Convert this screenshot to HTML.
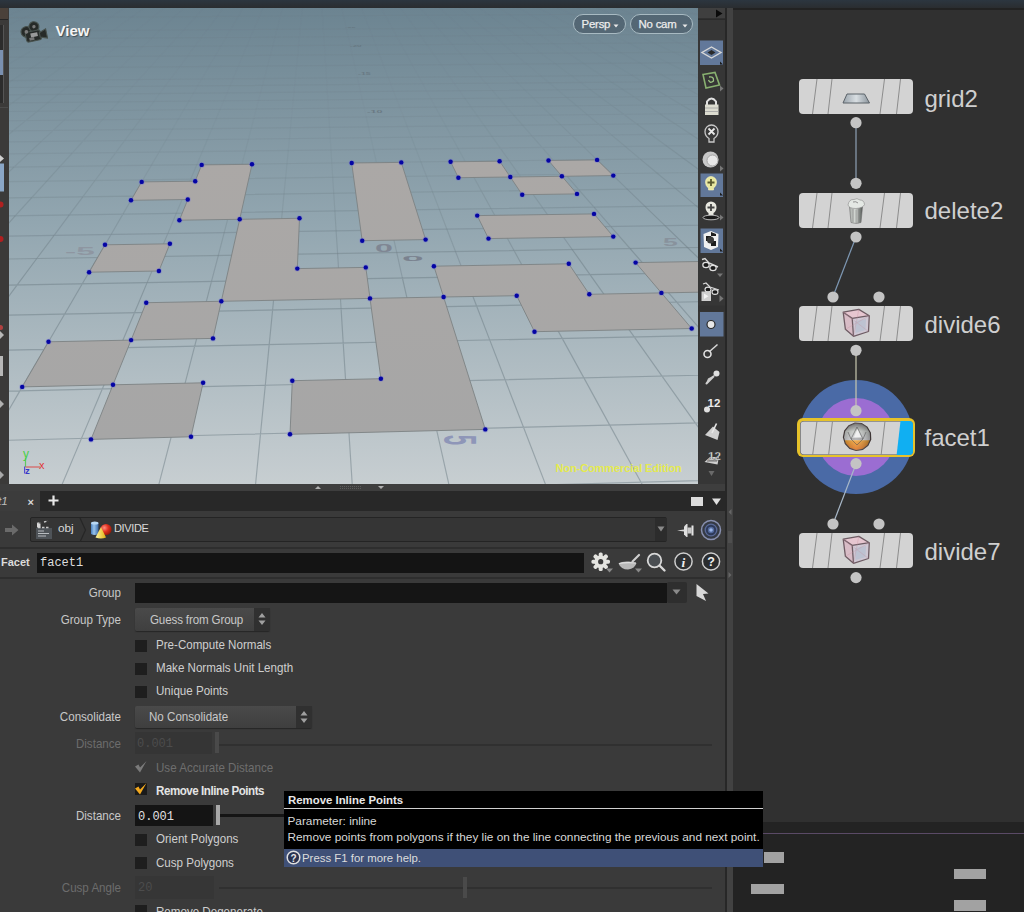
<!DOCTYPE html>
<html><head><meta charset="utf-8">
<style>
*{margin:0;padding:0;box-sizing:border-box}
html,body{width:1024px;height:912px;overflow:hidden;background:#3a3a3a;font-family:"Liberation Sans",sans-serif;color:#d0d0d0}
.a{position:absolute}
.lbl{position:absolute;font-size:12.8px;line-height:13px;color:#c8c8c8;white-space:nowrap;transform:scaleX(0.905);transform-origin:0 0;margin-top:-1px}
.rl{text-align:right;width:121px;left:0;transform-origin:121px 0}
.cb{position:absolute;left:135px;width:12px;height:12px;background:#1e1e1e}
.ct{position:absolute;left:156px;font-size:12.8px;line-height:13px;color:#cfcfcf;white-space:nowrap;transform:scaleX(0.905);transform-origin:0 0;margin-top:-1px}
.node{position:absolute;left:799px;width:114px;height:35px;border-radius:4px;background:#d3d3d3;overflow:hidden}
.dot{position:absolute;width:11px;height:11px;border-radius:50%;background:#c4c4c4}
.nl{position:absolute;left:924.5px;font-size:24px;line-height:27px;color:#cfcfcf;white-space:nowrap}
</style></head><body>
<!-- top bar -->
<div class="a" style="left:0;top:0;width:1024px;height:8px;background:linear-gradient(#2c3640,#2a2d30)"></div>
<!-- left strip -->
<div class="a" style="left:0;top:8px;width:9px;height:477px;background:#3b3a39"></div>
<!-- viewport -->
<div class="a" style="left:9px;top:8px;width:689px;height:476px;overflow:hidden">
<svg width="689" height="476" viewBox="9 8 689 476" style="position:absolute;left:0;top:0">
<defs><linearGradient id="bg" x1="0" y1="8" x2="0" y2="484" gradientUnits="userSpaceOnUse"><stop offset="0" stop-color="#6c8491"/><stop offset="0.45" stop-color="#92a6b0"/><stop offset="1" stop-color="#c7ced1"/></linearGradient><linearGradient id="pg" x1="0" y1="160" x2="0" y2="440" gradientUnits="userSpaceOnUse"><stop offset="0" stop-color="#aba8a6"/><stop offset="1" stop-color="#a6a6a6"/></linearGradient></defs>
<rect x="9" y="8" width="689" height="476" fill="url(#bg)"/>
<path d="M9.8,-0.7L3.5,1.6M3.5,1.6L-3.0,4.1M28.4,-0.8L22.5,1.5M22.5,1.5L16.4,4.0M16.4,4.0L10.0,6.5M10.0,6.5L3.3,9.1M3.3,9.1L-3.6,11.9M46.9,-0.9L41.4,1.4M41.4,1.4L35.7,3.9M35.7,3.9L29.8,6.4M29.8,6.4L23.5,9.0M23.5,9.0L17.0,11.8M17.0,11.8L10.2,14.7M10.2,14.7L3.1,17.7M3.1,17.7L-4.4,20.8M65.5,-1.0L60.3,1.3M60.3,1.3L55.0,3.8M55.0,3.8L49.5,6.3M49.5,6.3L43.7,8.9M43.7,8.9L37.6,11.7M37.6,11.7L31.3,14.5M31.3,14.5L24.7,17.6M24.7,17.6L17.7,20.7M17.7,20.7L10.5,24.0M10.5,24.0L2.8,27.5M2.8,27.5L-5.2,31.2M83.9,-1.1L79.2,1.3M79.2,1.3L74.3,3.7M74.3,3.7L69.2,6.2M69.2,6.2L63.8,8.8M63.8,8.8L58.2,11.6M58.2,11.6L52.4,14.4M52.4,14.4L46.2,17.4M46.2,17.4L39.8,20.6M39.8,20.6L33.1,23.9M33.1,23.9L26.0,27.4M26.0,27.4L18.6,31.0M18.6,31.0L10.7,34.8M10.7,34.8L2.5,38.9M2.5,38.9L-6.2,43.2M102.4,-1.2L98.0,1.2M98.0,1.2L93.5,3.6M93.5,3.6L88.8,6.1M88.8,6.1L83.9,8.7M83.9,8.7L78.7,11.4M78.7,11.4L73.4,14.3M73.4,14.3L67.7,17.3M67.7,17.3L61.8,20.5M61.8,20.5L55.6,23.8M55.6,23.8L49.1,27.2M49.1,27.2L42.3,30.9M42.3,30.9L35.1,34.7M35.1,34.7L27.5,38.7M27.5,38.7L19.5,43.0M19.5,43.0L11.1,47.5M120.8,-1.2L116.8,1.1M116.8,1.1L112.7,3.5M112.7,3.5L108.4,6.0M108.4,6.0L103.9,8.6M103.9,8.6L99.2,11.3M99.2,11.3L94.3,14.2M94.3,14.2L89.2,17.2M89.2,17.2L83.8,20.3M83.8,20.3L78.2,23.6M78.2,23.6L72.2,27.1M72.2,27.1L66.0,30.7M66.0,30.7L59.5,34.5M59.5,34.5L52.5,38.6M52.5,38.6L45.2,42.8M45.2,42.8L37.5,47.3M37.5,47.3L29.3,52.1M139.2,-1.3L135.6,1.0M135.6,1.0L131.9,3.4M131.9,3.4L128.0,5.9M128.0,5.9L123.9,8.5M123.9,8.5L119.7,11.2M119.7,11.2L115.3,14.1M115.3,14.1L110.6,17.1M110.6,17.1L105.8,20.2M105.8,20.2L100.7,23.5M100.7,23.5L95.3,26.9M95.3,26.9L89.7,30.6M89.7,30.6L83.7,34.4M83.7,34.4L77.5,38.4M77.5,38.4L70.9,42.6M70.9,42.6L63.9,47.1M63.9,47.1L56.5,51.9M56.5,51.9L48.7,56.9M157.5,-1.4L154.3,0.9M154.3,0.9L151.0,3.3M151.0,3.3L147.5,5.8M147.5,5.8L143.9,8.4M143.9,8.4L140.1,11.1M140.1,11.1L136.1,14.0M136.1,14.0L132.0,16.9M132.0,16.9L127.6,20.1M127.6,20.1L123.1,23.3M123.1,23.3L118.3,26.8M118.3,26.8L113.3,30.4M113.3,30.4L108.0,34.2M108.0,34.2L102.4,38.2M102.4,38.2L96.5,42.5M96.5,42.5L90.2,46.9M90.2,46.9L83.6,51.7M83.6,51.7L76.6,56.7M76.6,56.7L69.2,62.1M175.9,-1.5L173.0,0.8M173.0,0.8L170.1,3.2M170.1,3.2L167.0,5.7M167.0,5.7L163.8,8.3M163.8,8.3L160.5,11.0M160.5,11.0L157.0,13.8M157.0,13.8L153.3,16.8M153.3,16.8L149.5,19.9M149.5,19.9L145.5,23.2M145.5,23.2L141.2,26.6M141.2,26.6L136.8,30.3M136.8,30.3L132.1,34.1M132.1,34.1L127.2,38.1M127.2,38.1L122.0,42.3M122.0,42.3L116.5,46.8M116.5,46.8L110.7,51.5M110.7,51.5L104.5,56.5M104.5,56.5L98.0,61.9M98.0,61.9L91.0,67.5M91.0,67.5L83.5,73.6M194.2,-1.6L191.7,0.7M191.7,0.7L189.2,3.1M189.2,3.1L186.5,5.6M186.5,5.6L183.7,8.2M183.7,8.2L180.8,10.9M180.8,10.9L177.8,13.7M177.8,13.7L174.6,16.7M174.6,16.7L171.3,19.8M171.3,19.8L167.8,23.1M167.8,23.1L164.1,26.5M164.1,26.5L160.3,30.1M160.3,30.1L156.3,33.9M156.3,33.9L152.0,37.9M152.0,37.9L147.5,42.1M147.5,42.1L142.7,46.6M142.7,46.6L137.7,51.3M137.7,51.3L132.3,56.3M132.3,56.3L126.6,61.6M126.6,61.6L120.6,67.3M120.6,67.3L114.1,73.3M114.1,73.3L107.2,79.8M212.4,-1.7L210.3,0.6M210.3,0.6L208.2,3.0M208.2,3.0L205.9,5.5M205.9,5.5L203.6,8.1M203.6,8.1L201.1,10.8M201.1,10.8L198.6,13.6M198.6,13.6L195.9,16.6M195.9,16.6L193.1,19.7M193.1,19.7L190.1,22.9M190.1,22.9L187.0,26.4M187.0,26.4L183.7,30.0M183.7,30.0L180.3,33.7M180.3,33.7L176.7,37.7M176.7,37.7L172.9,41.9M172.9,41.9L168.9,46.4M168.9,46.4L164.6,51.1M164.6,51.1L160.1,56.1M160.1,56.1L155.2,61.4M155.2,61.4L150.1,67.1M150.1,67.1L144.7,73.1M144.7,73.1L138.8,79.5M138.8,79.5L132.6,86.4M230.7,-1.8L229.0,0.5M229.0,0.5L227.2,2.9M227.2,2.9L225.3,5.4M225.3,5.4L223.4,8.0M223.4,8.0L221.4,10.7M221.4,10.7L219.3,13.5M219.3,13.5L217.1,16.5M217.1,16.5L214.8,19.6M214.8,19.6L212.3,22.8M212.3,22.8L209.8,26.2M209.8,26.2L207.1,29.8M207.1,29.8L204.3,33.6M204.3,33.6L201.4,37.6M201.4,37.6L198.2,41.8M198.2,41.8L194.9,46.2M194.9,46.2L191.4,50.9M191.4,50.9L187.7,55.9M187.7,55.9L183.8,61.2M183.8,61.2L179.6,66.8M179.6,66.8L175.1,72.8M175.1,72.8L170.3,79.3M170.3,79.3L165.2,86.1M165.2,86.1L159.7,93.5M248.9,-1.9L247.5,0.4M247.5,0.4L246.1,2.8M246.1,2.8L244.7,5.3M244.7,5.3L243.2,7.9M243.2,7.9L241.6,10.6M241.6,10.6L240.0,13.4M240.0,13.4L238.2,16.3M238.2,16.3L236.4,19.4M236.4,19.4L234.5,22.7M234.5,22.7L232.6,26.1M232.6,26.1L230.5,29.7M230.5,29.7L228.3,33.4M228.3,33.4L226.0,37.4M226.0,37.4L223.5,41.6M223.5,41.6L220.9,46.0M220.9,46.0L218.2,50.7M218.2,50.7L215.3,55.7M215.3,55.7L212.2,61.0M212.2,61.0L209.0,66.6M209.0,66.6L205.5,72.6M205.5,72.6L201.7,79.0M201.7,79.0L197.7,85.8M197.7,85.8L193.4,93.2M193.4,93.2L188.8,101.1M267.0,-2.0L266.1,0.3M266.1,0.3L265.1,2.7M265.1,2.7L264.0,5.2M264.0,5.2L262.9,7.8M262.9,7.8L261.8,10.5M261.8,10.5L260.6,13.3M260.6,13.3L259.4,16.2M259.4,16.2L258.1,19.3M258.1,19.3L256.7,22.5M256.7,22.5L255.3,25.9M255.3,25.9L253.8,29.5M253.8,29.5L252.2,33.3M252.2,33.3L250.5,37.2M250.5,37.2L248.8,41.4M248.8,41.4L246.9,45.8M246.9,45.8L244.9,50.5M244.9,50.5L242.8,55.5M242.8,55.5L240.6,60.7M240.6,60.7L238.2,66.4M238.2,66.4L235.7,72.3M235.7,72.3L233.0,78.7M233.0,78.7L230.2,85.6M230.2,85.6L227.1,92.9M227.1,92.9L223.7,100.8M223.7,100.8L220.1,109.3M285.2,-2.0L284.6,0.2M284.6,0.2L284.0,2.6M284.0,2.6L283.3,5.1M283.3,5.1L282.6,7.7M282.6,7.7L281.9,10.3M281.9,10.3L281.2,13.2M281.2,13.2L280.5,16.1M280.5,16.1L279.7,19.2M279.7,19.2L278.8,22.4M278.8,22.4L277.9,25.8M277.9,25.8L277.0,29.4M277.0,29.4L276.0,33.1M276.0,33.1L275.0,37.1M275.0,37.1L273.9,41.2M273.9,41.2L272.8,45.7M272.8,45.7L271.6,50.3M271.6,50.3L270.3,55.3M270.3,55.3L268.9,60.5M268.9,60.5L267.5,66.1M267.5,66.1L265.9,72.1M265.9,72.1L264.3,78.4M264.3,78.4L262.5,85.3M262.5,85.3L260.6,92.6M260.6,92.6L258.5,100.5M258.5,100.5L256.3,109.0M256.3,109.0L253.9,118.2M303.3,-2.1L303.0,0.1M303.0,0.1L302.8,2.5M302.8,2.5L302.6,5.0M302.6,5.0L302.3,7.6M302.3,7.6L302.1,10.2M302.1,10.2L301.8,13.0M301.8,13.0L301.5,16.0M301.5,16.0L301.2,19.1M301.2,19.1L300.9,22.3M300.9,22.3L300.5,25.7M300.5,25.7L300.2,29.2M300.2,29.2L299.8,33.0M299.8,33.0L299.4,36.9M299.4,36.9L299.0,41.1M299.0,41.1L298.6,45.5M298.6,45.5L298.1,50.1M298.1,50.1L297.7,55.1M297.7,55.1L297.1,60.3M297.1,60.3L296.6,65.9M296.6,65.9L296.0,71.8M296.0,71.8L295.4,78.2M295.4,78.2L294.7,85.0M294.7,85.0L294.0,92.3M294.0,92.3L293.2,100.1M293.2,100.1L292.4,108.6M292.4,108.6L291.5,117.8M321.3,-2.2L321.5,0.1M321.5,0.1L321.6,2.4M321.6,2.4L321.8,4.9M321.8,4.9L322.0,7.4M322.0,7.4L322.1,10.1M322.1,10.1L322.3,12.9M322.3,12.9L322.5,15.9M322.5,15.9L322.7,18.9M322.7,18.9L322.9,22.2M322.9,22.2L323.1,25.5M323.1,25.5L323.3,29.1M323.3,29.1L323.6,32.8M323.6,32.8L323.8,36.8M323.8,36.8L324.1,40.9M324.1,40.9L324.4,45.3M324.4,45.3L324.7,49.9M324.7,49.9L325.0,54.9M325.0,54.9L325.3,60.1M325.3,60.1L325.7,65.7M325.7,65.7L326.0,71.6M326.0,71.6L326.4,77.9M326.4,77.9L326.9,84.7M326.9,84.7L327.3,92.0M327.3,92.0L327.8,99.8M327.8,99.8L328.4,108.2M328.4,108.2L328.9,117.4M339.9,-0.0L340.4,2.3M340.4,2.3L341.0,4.8M341.0,4.8L341.6,7.3M341.6,7.3L342.2,10.0M342.2,10.0L342.8,12.8M342.8,12.8L343.5,15.7M343.5,15.7L344.1,18.8M344.1,18.8L344.9,22.0M344.9,22.0L345.6,25.4M345.6,25.4L346.4,28.9M346.4,28.9L347.3,32.7M347.3,32.7L348.1,36.6M348.1,36.6L349.1,40.7M349.1,40.7L350.1,45.1M350.1,45.1L351.1,49.7M351.1,49.7L352.2,54.7M352.2,54.7L353.4,59.9M353.4,59.9L354.6,65.4M354.6,65.4L356.0,71.3M356.0,71.3L357.4,77.6M357.4,77.6L358.9,84.4M358.9,84.4L360.5,91.7M360.5,91.7L362.3,99.5M362.3,99.5L364.2,107.9M364.2,107.9L366.2,117.0M358.3,-0.1L359.2,2.2M359.2,2.2L360.1,4.7M360.1,4.7L361.1,7.2M361.1,7.2L362.2,9.9M362.2,9.9L363.2,12.7M363.2,12.7L364.4,15.6M364.4,15.6L365.6,18.7M365.6,18.7L366.8,21.9M366.8,21.9L368.1,25.3M368.1,25.3L369.5,28.8M369.5,28.8L370.9,32.5M370.9,32.5L372.4,36.4M372.4,36.4L374.0,40.6M374.0,40.6L375.7,44.9M375.7,44.9L377.5,49.6M377.5,49.6L379.4,54.5M379.4,54.5L381.4,59.7M381.4,59.7L383.5,65.2M383.5,65.2L385.8,71.1M385.8,71.1L388.2,77.4M388.2,77.4L390.8,84.1M390.8,84.1L393.6,91.4M393.6,91.4L396.6,99.1M396.6,99.1L399.9,107.5M399.9,107.5L403.4,116.6M376.6,-0.2L377.9,2.1M377.9,2.1L379.3,4.6M379.3,4.6L380.7,7.1M380.7,7.1L382.1,9.8M382.1,9.8L383.6,12.6M383.6,12.6L385.2,15.5M385.2,15.5L386.9,18.6M386.9,18.6L388.7,21.8M388.7,21.8L390.5,25.1M390.5,25.1L392.4,28.6M392.4,28.6L394.5,32.4M394.5,32.4L396.6,36.3M396.6,36.3L398.9,40.4M398.9,40.4L401.3,44.8M401.3,44.8L403.8,49.4M403.8,49.4L406.5,54.2M406.5,54.2L409.3,59.4M409.3,59.4L412.3,65.0M412.3,65.0L415.6,70.8M415.6,70.8L419.0,77.1M419.0,77.1L422.7,83.8M422.7,83.8L426.6,91.0M426.6,91.0L430.9,98.8M430.9,98.8L435.5,107.2M394.9,-0.3L396.6,2.0M396.6,2.0L398.3,4.5M398.3,4.5L400.2,7.0M400.2,7.0L402.0,9.7M402.0,9.7L404.0,12.5M404.0,12.5L406.1,15.4M406.1,15.4L408.2,18.4M408.2,18.4L410.5,21.6M410.5,21.6L412.9,25.0M412.9,25.0L415.4,28.5M415.4,28.5L418.0,32.2M418.0,32.2L420.8,36.1M420.8,36.1L423.7,40.2M423.7,40.2L426.8,44.6M426.8,44.6L430.0,49.2M430.0,49.2L433.5,54.0M433.5,54.0L437.2,59.2M437.2,59.2L441.1,64.7M441.1,64.7L445.2,70.6M445.2,70.6L449.7,76.9M449.7,76.9L454.4,83.6M454.4,83.6L459.5,90.7M459.5,90.7L465.0,98.5M413.2,-0.4L415.3,1.9M415.3,1.9L417.4,4.4M417.4,4.4L419.6,6.9M419.6,6.9L421.9,9.6M421.9,9.6L424.3,12.4M424.3,12.4L426.9,15.3M426.9,15.3L429.5,18.3M429.5,18.3L432.3,21.5M432.3,21.5L435.2,24.8M435.2,24.8L438.3,28.4M438.3,28.4L441.5,32.1M441.5,32.1L444.9,35.9M444.9,35.9L448.5,40.1M448.5,40.1L452.2,44.4M452.2,44.4L456.2,49.0M456.2,49.0L460.5,53.8M460.5,53.8L465.0,59.0M465.0,59.0L469.7,64.5M469.7,64.5L474.8,70.3M474.8,70.3L480.3,76.6M480.3,76.6L486.1,83.3M486.1,83.3L492.3,90.4M431.5,-0.5L433.9,1.8M433.9,1.8L436.4,4.3M436.4,4.3L439.0,6.8M439.0,6.8L441.8,9.5M441.8,9.5L444.6,12.3M444.6,12.3L447.6,15.1M447.6,15.1L450.8,18.2M450.8,18.2L454.0,21.4M454.0,21.4L457.5,24.7M457.5,24.7L461.1,28.2M461.1,28.2L464.9,31.9M464.9,31.9L468.9,35.8M468.9,35.8L473.2,39.9M473.2,39.9L477.6,44.2M477.6,44.2L482.4,48.8M482.4,48.8L487.4,53.6M487.4,53.6L492.7,58.8M492.7,58.8L498.3,64.3M498.3,64.3L504.4,70.1M504.4,70.1L510.8,76.3M510.8,76.3L517.7,83.0M449.7,-0.6L452.5,1.8M452.5,1.8L455.4,4.2M455.4,4.2L458.4,6.7M458.4,6.7L461.6,9.4M461.6,9.4L464.9,12.1M464.9,12.1L468.3,15.0M468.3,15.0L472.0,18.1M472.0,18.1L475.7,21.2M475.7,21.2L479.7,24.6M479.7,24.6L483.9,28.1M483.9,28.1L488.3,31.7M488.3,31.7L492.9,35.6M492.9,35.6L497.8,39.7M497.8,39.7L503.0,44.0M503.0,44.0L508.4,48.6M508.4,48.6L514.2,53.4M514.2,53.4L520.3,58.6M520.3,58.6L526.8,64.0M526.8,64.0L533.8,69.9M533.8,69.9L541.2,76.1M467.9,-0.7L471.1,1.7M471.1,1.7L474.3,4.1M474.3,4.1L477.8,6.6M477.8,6.6L481.4,9.3M481.4,9.3L485.1,12.0M485.1,12.0L489.0,14.9M489.0,14.9L493.1,17.9M493.1,17.9L497.4,21.1M497.4,21.1L501.9,24.4M501.9,24.4L506.6,27.9M506.6,27.9L511.6,31.6M511.6,31.6L516.9,35.5M516.9,35.5L522.4,39.5M522.4,39.5L528.2,43.9M528.2,43.9L534.4,48.4M534.4,48.4L540.9,53.2M540.9,53.2L547.9,58.4M547.9,58.4L555.3,63.8M486.1,-0.8L489.6,1.6M489.6,1.6L493.3,4.0M493.3,4.0L497.1,6.5M497.1,6.5L501.1,9.2M501.1,9.2L505.3,11.9M505.3,11.9L509.6,14.8M509.6,14.8L514.2,17.8M514.2,17.8L519.0,21.0M519.0,21.0L524.1,24.3M524.1,24.3L529.3,27.8M529.3,27.8L534.9,31.4M534.9,31.4L540.8,35.3M540.8,35.3L546.9,39.4M546.9,39.4L553.4,43.7M553.4,43.7L560.3,48.2M560.3,48.2L567.6,53.0M567.6,53.0L575.4,58.1M504.2,-0.8L508.1,1.5M508.1,1.5L512.1,3.9M512.1,3.9L516.4,6.4M516.4,6.4L520.8,9.1M520.8,9.1L525.4,11.8M525.4,11.8L530.2,14.7M530.2,14.7L535.3,17.7M535.3,17.7L540.6,20.8M540.6,20.8L546.1,24.2M546.1,24.2L552.0,27.6M552.0,27.6L558.1,31.3M558.1,31.3L564.6,35.1M564.6,35.1L571.4,39.2M571.4,39.2L578.6,43.5M578.6,43.5L586.2,48.0M586.2,48.0L594.3,52.8M522.3,-0.9L526.5,1.4M526.5,1.4L531.0,3.8M531.0,3.8L535.6,6.3M535.6,6.3L540.5,8.9M540.5,8.9L545.5,11.7M545.5,11.7L550.8,14.6M550.8,14.6L556.3,17.6M556.3,17.6L562.1,20.7M562.1,20.7L568.2,24.0M568.2,24.0L574.6,27.5M574.6,27.5L581.3,31.1M581.3,31.1L588.4,35.0M588.4,35.0L595.8,39.0M595.8,39.0L603.7,43.3M603.7,43.3L612.0,47.8M540.3,-1.0L545.0,1.3M545.0,1.3L549.8,3.7M549.8,3.7L554.8,6.2M554.8,6.2L560.1,8.8M560.1,8.8L565.6,11.6M565.6,11.6L571.3,14.4M571.3,14.4L577.3,17.4M577.3,17.4L583.6,20.6M583.6,20.6L590.2,23.9M590.2,23.9L597.1,27.4M597.1,27.4L604.4,31.0M604.4,31.0L612.1,34.8M612.1,34.8L620.2,38.9M620.2,38.9L628.7,43.1M558.4,-1.1L563.4,1.2M563.4,1.2L568.6,3.6M568.6,3.6L574.0,6.1M574.0,6.1L579.7,8.7M579.7,8.7L585.6,11.5M585.6,11.5L591.8,14.3M591.8,14.3L598.3,17.3M598.3,17.3L605.0,20.5M605.0,20.5L612.2,23.8M612.2,23.8L619.6,27.2M619.6,27.2L627.5,30.8M627.5,30.8L635.8,34.7M635.8,34.7L644.5,38.7M576.4,-1.2L581.7,1.1M581.7,1.1L587.3,3.5M587.3,3.5L593.2,6.0M593.2,6.0L599.2,8.6M599.2,8.6L605.6,11.4M605.6,11.4L612.2,14.2M612.2,14.2L619.2,17.2M619.2,17.2L626.4,20.3M626.4,20.3L634.1,23.6M634.1,23.6L642.1,27.1M642.1,27.1L650.5,30.7M650.5,30.7L659.4,34.5M594.4,-1.3L600.1,1.0M600.1,1.0L606.0,3.4M606.0,3.4L612.3,5.9M612.3,5.9L618.7,8.5M618.7,8.5L625.5,11.2M625.5,11.2L632.6,14.1M632.6,14.1L640.0,17.1M640.0,17.1L647.8,20.2M647.8,20.2L655.9,23.5M655.9,23.5L664.5,26.9M664.5,26.9L673.5,30.5M612.3,-1.4L618.4,0.9M618.4,0.9L624.7,3.3M624.7,3.3L631.3,5.8M631.3,5.8L638.2,8.4M638.2,8.4L645.4,11.1M645.4,11.1L653.0,14.0M653.0,14.0L660.8,17.0M660.8,17.0L669.1,20.1M669.1,20.1L677.7,23.4M677.7,23.4L686.8,26.8M630.2,-1.5L636.7,0.8M636.7,0.8L643.4,3.2M643.4,3.2L650.4,5.7M650.4,5.7L657.7,8.3M657.7,8.3L665.3,11.0M665.3,11.0L673.3,13.9M673.3,13.9L681.6,16.8M681.6,16.8L690.4,20.0M690.4,20.0L699.5,23.2M648.1,-1.6L654.9,0.7M654.9,0.7L662.0,3.1M662.0,3.1L669.4,5.6M669.4,5.6L677.1,8.2M677.1,8.2L685.1,10.9M685.1,10.9L693.5,13.8M693.5,13.8L702.3,16.7M666.0,-1.6L673.1,0.6M673.1,0.6L680.6,3.0M680.6,3.0L688.3,5.5M688.3,5.5L696.5,8.1M696.5,8.1L704.9,10.8M683.8,-1.7L691.3,0.5M691.3,0.5L699.1,2.9M699.1,2.9L707.3,5.4" stroke="#6e7e86" stroke-opacity="0.05" stroke-width="1.15" fill="none"/>
<path d="M11.1,47.5L2.1,52.3M2.1,52.3L-7.4,57.4M29.3,52.1L20.7,57.1M20.7,57.1L11.4,62.5M11.4,62.5L1.6,68.3M1.6,68.3L-8.9,74.4M48.7,56.9L40.4,62.3M40.4,62.3L31.5,68.0M31.5,68.0L22.0,74.1M22.0,74.1L11.9,80.6M69.2,62.1L61.3,67.8M61.3,67.8L52.8,73.8M52.8,73.8L43.8,80.3M43.8,80.3L34.1,87.3M83.5,73.6L75.6,80.1M75.6,80.1L67.0,87.0M67.0,87.0L57.9,94.5M107.2,79.8L99.8,86.7M99.8,86.7L91.9,94.2M91.9,94.2L83.4,102.2M132.6,86.4L125.9,93.8M125.9,93.8L118.6,101.8M118.6,101.8L110.8,110.4M159.7,93.5L153.8,101.5M153.8,101.5L147.4,110.1M147.4,110.1L140.5,119.4M188.8,101.1L183.8,109.7M183.8,109.7L178.4,119.0M178.4,119.0L172.5,129.0M220.1,109.3L216.2,118.6M216.2,118.6L212.0,128.6M212.0,128.6L207.4,139.5M253.9,118.2L251.3,128.2M251.3,128.2L248.5,139.1M291.5,117.8L290.5,127.7M290.5,127.7L289.5,138.6M289.5,138.6L288.3,150.5M328.9,117.4L329.6,127.3M329.6,127.3L330.2,138.1M330.2,138.1L331.0,150.0M366.2,117.0L368.5,126.9M368.5,126.9L370.9,137.7M370.9,137.7L373.5,149.5M403.4,116.6L407.2,126.5M407.2,126.5L411.4,137.2M435.5,107.2L440.4,116.2M440.4,116.2L445.8,126.1M445.8,126.1L451.7,136.8M465.0,98.5L470.9,106.8M470.9,106.8L477.4,115.8M477.4,115.8L484.3,125.6M492.3,90.4L499.1,98.2M499.1,98.2L506.3,106.5M506.3,106.5L514.1,115.5M517.7,83.0L525.0,90.1M525.0,90.1L533.0,97.8M533.0,97.8L541.5,106.1M541.2,76.1L549.1,82.7M549.1,82.7L557.6,89.8M557.6,89.8L566.8,97.5M555.3,63.8L563.1,69.6M563.1,69.6L571.5,75.8M571.5,75.8L580.5,82.4M580.5,82.4L590.1,89.5M575.4,58.1L583.6,63.6M583.6,63.6L592.4,69.4M592.4,69.4L601.8,75.5M601.8,75.5L611.8,82.2M594.3,52.8L602.8,57.9M602.8,57.9L611.9,63.4M611.9,63.4L621.6,69.1M621.6,69.1L631.9,75.3M612.0,47.8L620.8,52.6M620.8,52.6L630.2,57.7M630.2,57.7L640.1,63.1M640.1,63.1L650.7,68.9M628.7,43.1L637.7,47.7M637.7,47.7L647.3,52.4M647.3,52.4L657.5,57.5M657.5,57.5L668.2,62.9M644.5,38.7L653.7,43.0M653.7,43.0L663.4,47.5M663.4,47.5L673.7,52.2M673.7,52.2L684.7,57.3M659.4,34.5L668.7,38.5M668.7,38.5L678.6,42.8M678.6,42.8L689.0,47.3M689.0,47.3L700.1,52.0M673.5,30.5L682.9,34.4M682.9,34.4L692.9,38.4M692.9,38.4L703.4,42.6M686.8,26.8L696.4,30.4M696.4,30.4L706.4,34.2M699.5,23.2L709.1,26.6" stroke="#6e7e86" stroke-opacity="0.10" stroke-width="1.15" fill="none"/>
<path d="M11.9,80.6L1.1,87.6M1.1,87.6L-10.6,95.1M34.1,87.3L23.7,94.8M23.7,94.8L12.5,102.8M57.9,94.5L48.0,102.5M48.0,102.5L37.3,111.2M83.4,102.2L74.1,110.8M74.1,110.8L64.1,120.2M110.8,110.4L102.4,119.8M102.4,119.8L93.2,129.9M140.5,119.4L132.9,129.5M132.9,129.5L124.7,140.5M172.5,129.0L166.1,140.0M166.1,140.0L159.1,152.0M207.4,139.5L202.4,151.5M202.4,151.5L196.8,164.7M248.5,139.1L245.4,151.0M245.4,151.0L242.0,164.1M288.3,150.5L287.0,163.5M287.0,163.5L285.6,177.9M331.0,150.0L331.8,163.0M331.8,163.0L332.7,177.3M373.5,149.5L376.4,162.4M376.4,162.4L379.7,176.7M411.4,137.2L415.9,149.0M415.9,149.0L420.9,161.9M451.7,136.8L458.1,148.5M458.1,148.5L465.1,161.3M484.3,125.6L491.9,136.3M491.9,136.3L500.1,147.9M514.1,115.5L522.6,125.2M522.6,125.2L531.9,135.8M541.5,106.1L550.8,115.1M550.8,115.1L560.8,124.8M566.8,97.5L576.7,105.8M576.7,105.8L587.3,114.7M590.1,89.5L600.5,97.2M600.5,97.2L611.6,105.4M611.8,82.2L622.5,89.2M622.5,89.2L634.1,96.8M631.9,75.3L643.0,81.9M643.0,81.9L654.8,88.9M650.7,68.9L662.0,75.0M662.0,75.0L674.1,81.6M674.1,81.6L687.0,88.6M668.2,62.9L679.7,68.6M679.7,68.6L692.0,74.8M692.0,74.8L705.1,81.3M684.7,57.3L696.3,62.7M696.3,62.7L708.7,68.4" stroke="#6e7e86" stroke-opacity="0.15" stroke-width="1.15" fill="none"/>
<path d="M-1415.3,3.8L1759.7,-11.2M-1574.6,14.7L1873.0,-3.1M-1766.1,27.7L2005.6,6.3M-2000.9,43.7L2162.9,17.5M-2139.4,53.2L2253.0,23.9M-2295.5,63.8L2352.3,31.0M-2472.7,75.9L2462.4,38.8M-2675.9,89.7L2585.1,47.5M-2910.9,105.8L2722.6,57.3M-3042.9,114.8L2797.8,62.6M-3186.1,124.5L2877.8,68.3M-3342.0,135.1L2963.2,74.4M-3512.6,146.8L3054.5,80.9M-3699.8,159.5L3152.3,87.9M-3906.2,173.6L3257.3,95.3M-4135.1,189.2L3370.4,103.4M-4390.1,206.6L3492.5,112.1M12.5,102.8L0.4,111.5M0.4,111.5L-12.7,121.0M37.3,111.2L25.8,120.6M25.8,120.6L13.2,130.8M64.1,120.2L53.3,130.3M53.3,130.3L41.4,141.4M93.2,129.9L83.1,141.0M83.1,141.0L72.2,153.1M124.7,140.5L115.7,152.6M115.7,152.6L105.9,165.8M159.1,152.0L151.4,165.2M151.4,165.2L142.9,179.8M196.8,164.7L190.7,179.2M242.0,164.1L238.3,178.6M238.3,178.6L234.1,194.6M285.6,177.9L284.0,193.9M332.7,177.3L333.7,193.2M379.7,176.7L383.2,192.5M420.9,161.9L426.4,176.1M426.4,176.1L432.5,191.8M465.1,161.3L472.9,175.5M500.1,147.9L509.2,160.7M531.9,135.8L542.0,147.4M542.0,147.4L553.1,160.2M560.8,124.8L571.7,135.4M571.7,135.4L583.7,146.9M587.3,114.7L598.9,124.4M598.9,124.4L611.5,134.9M611.6,105.4L623.7,114.3M623.7,114.3L636.8,124.0M634.1,96.8L646.5,105.1M646.5,105.1L660.0,113.9M654.8,88.9L667.6,96.5M667.6,96.5L681.3,104.7M687.0,88.6L701.0,96.2" stroke="#6e7e86" stroke-opacity="0.20" stroke-width="1.15" fill="none"/>
<path d="M-4676.2,226.1L3624.8,121.5M-4999.4,248.1L3768.5,131.7M13.2,130.8L-0.5,141.9M41.4,141.4L28.4,153.6M28.4,153.6L14.1,167.0M72.2,153.1L60.1,166.4M105.9,165.8L95.0,180.5M142.9,179.8L133.5,196.0M190.7,179.2L183.9,195.3M183.9,195.3L176.3,213.3M234.1,194.6L229.4,212.6M284.0,193.9L282.3,211.8M333.7,193.2L334.9,211.0M383.2,192.5L387.2,210.2M432.5,191.8L439.3,209.4M472.9,175.5L481.5,191.2M509.2,160.7L519.2,174.8M519.2,174.8L530.3,190.5M553.1,160.2L565.3,174.2M583.7,146.9L596.8,159.6M611.5,134.9L625.2,146.4M625.2,146.4L640.3,159.1M636.8,124.0L651.0,134.5M651.0,134.5L666.6,146.0M660.0,113.9L674.6,123.6M674.6,123.6L690.5,134.0M681.3,104.7L696.1,113.6M696.1,113.6L712.2,123.1" stroke="#6e7e86" stroke-opacity="0.25" stroke-width="1.15" fill="none"/>
<path d="M-5367.3,273.2L3925.4,142.9M14.1,167.0L-1.7,181.8M60.1,166.4L46.8,181.1M46.8,181.1L31.9,197.5M95.0,180.5L82.8,196.8M133.5,196.0L122.9,214.1M176.3,213.3L167.8,233.6M229.4,212.6L224.2,232.7M282.3,211.8L280.3,231.8M334.9,211.0L336.1,230.9M387.2,210.2L391.7,230.0M439.3,209.4L446.9,229.2M481.5,191.2L491.1,208.7M530.3,190.5L542.7,207.9M565.3,174.2L578.9,189.8M596.8,159.6L611.2,173.6M640.3,159.1L656.9,173.0M666.6,146.0L683.7,158.5M690.5,134.0L707.8,145.5" stroke="#6e7e86" stroke-opacity="0.30" stroke-width="1.15" fill="none"/>
<path d="M-5790.0,302.0L4097.1,155.1M31.9,197.5L15.4,215.7M82.8,196.8L69.3,214.9M122.9,214.1L111.1,234.5M224.2,232.7L218.3,255.5M280.3,231.8L278.1,254.4M336.1,230.9L337.6,253.4M391.7,230.0L396.7,252.4M446.9,229.2L455.5,251.5M491.1,208.7L501.9,228.3M542.7,207.9L556.5,227.4M578.9,189.8L594.0,207.1M611.2,173.6L627.2,189.1M656.9,173.0L675.4,188.4M683.7,158.5L702.5,172.4" stroke="#6e7e86" stroke-opacity="0.35" stroke-width="1.15" fill="none"/>
<path d="M-6280.6,335.4L4286.0,168.5M69.3,214.9L54.1,235.4M111.1,234.5L97.7,257.5M167.8,233.6L158.1,256.5M218.3,255.5L211.5,281.4M278.1,254.4L275.6,280.3M337.6,253.4L339.2,279.1M396.7,252.4L402.4,278.0M455.5,251.5L465.3,276.8M501.9,228.3L514.0,250.5M556.5,227.4L572.2,249.5M594.0,207.1L610.9,226.6M627.2,189.1L645.0,206.4M675.4,188.4L695.9,205.6" stroke="#6e7e86" stroke-opacity="0.40" stroke-width="1.15" fill="none"/>
<path d="M-6856.9,374.7L4494.7,183.4M15.4,215.7L-3.2,236.3M54.1,235.4L36.8,258.5M158.1,256.5L147.1,282.6M339.2,279.1L341.1,308.7M514.0,250.5L527.8,275.7M610.9,226.6L630.0,248.5M645.0,206.4L665.0,225.7" stroke="#6e7e86" stroke-opacity="0.45" stroke-width="1.15" fill="none"/>
<path d="M-7543.7,421.5L4726.7,199.9M-8375.8,478.2L4985.8,218.3M-9405.2,548.4L5277.3,239.1M-10711.1,637.4L5607.6,262.5M-12422.5,754.0L5985.0,289.4M-14762.7,913.5L6420.3,320.4M-18156.5,1144.8L6928.1,356.5M36.8,258.5L17.2,284.9M17.2,284.9L-5.5,315.4M97.7,257.5L82.3,283.8M82.3,283.8L64.7,314.0M64.7,314.0L44.1,349.3M44.1,349.3L19.9,390.9M19.9,390.9L-9.1,440.7M147.1,282.6L134.5,312.7M134.5,312.7L119.7,347.7M119.7,347.7L102.3,389.0M102.3,389.0L81.5,438.4M81.5,438.4L56.1,498.6M56.1,498.6L24.6,573.4M24.6,573.4L-15.7,669.2M211.5,281.4L203.8,311.3M203.8,311.3L194.7,346.1M194.7,346.1L184.1,387.1M184.1,387.1L171.4,436.1M171.4,436.1L155.9,495.8M155.9,495.8L136.6,569.9M136.6,569.9L112.0,664.6M275.6,280.3L272.6,310.0M272.6,310.0L269.2,344.6M269.2,344.6L265.3,385.3M265.3,385.3L260.5,433.9M260.5,433.9L254.7,493.0M254.7,493.0L247.5,566.4M247.5,566.4L238.3,660.1M341.1,308.7L343.2,343.0M343.2,343.0L345.8,383.4M345.8,383.4L348.9,431.7M348.9,431.7L352.6,490.3M352.6,490.3L357.2,563.0M357.2,563.0L363.1,655.6M402.4,278.0L409.1,307.3M409.1,307.3L416.7,341.5M416.7,341.5L425.8,381.6M425.8,381.6L436.5,429.4M436.5,429.4L449.6,487.6M449.6,487.6L465.8,559.6M465.8,559.6L486.4,651.2M465.3,276.8L476.6,306.0M476.6,306.0L489.7,339.9M489.7,339.9L505.1,379.8M505.1,379.8L523.5,427.3M523.5,427.3L545.7,484.9M545.7,484.9L573.3,556.2M573.3,556.2L608.3,646.8M527.8,275.7L543.7,304.7M543.7,304.7L562.2,338.4M562.2,338.4L583.9,377.9M583.9,377.9L609.7,425.1M609.7,425.1L641.0,482.2M641.0,482.2L679.7,552.9M679.7,552.9L728.8,642.5M572.2,249.5L590.0,274.6M590.0,274.6L610.4,303.4M610.4,303.4L634.2,336.9M634.2,336.9L662.0,376.1M662.0,376.1L695.2,422.9M695.2,422.9L735.4,479.6M630.0,248.5L651.8,273.5M651.8,273.5L676.7,302.1M676.7,302.1L705.7,335.4M665.0,225.7L687.5,247.5M687.5,247.5L713.2,272.4M695.9,205.6L718.8,224.9" stroke="#6e7e86" stroke-opacity="0.50" stroke-width="1.15" fill="none"/>
<polygon points="201.7,164.9 252.0,164.3 239.7,219.3 179.4,220.2 187.8,199.5 131.0,200.3 141.7,181.9 195.2,181.2" fill="url(#pg)" stroke="#7d8283" stroke-width="0.9"/>
<polygon points="105.0,244.8 169.9,243.8 158.9,271.0 89.1,272.2" fill="url(#pg)" stroke="#7d8283" stroke-width="0.9"/>
<polygon points="239.7,219.3 299.5,218.3 297.3,268.6 365.8,267.4 370.0,298.4 221.3,301.3" fill="url(#pg)" stroke="#7d8283" stroke-width="0.9"/>
<polygon points="146.2,302.7 221.3,301.3 213.0,338.4 131.1,340.1" fill="url(#pg)" stroke="#7d8283" stroke-width="0.9"/>
<polygon points="370.0,298.4 443.6,297.0 485.3,429.4 290.0,434.3 292.3,380.7 380.9,378.7" fill="url(#pg)" stroke="#7d8283" stroke-width="0.9"/>
<polygon points="48.5,341.8 131.1,340.1 113.0,384.8 22.2,386.9" fill="url(#pg)" stroke="#7d8283" stroke-width="0.9"/>
<polygon points="113.0,384.8 203.1,382.8 191.0,436.8 91.0,439.4" fill="url(#pg)" stroke="#7d8283" stroke-width="0.9"/>
<polygon points="351.7,163.0 401.3,162.4 425.6,239.6 362.2,240.7" fill="url(#pg)" stroke="#7d8283" stroke-width="0.9"/>
<polygon points="450.6,161.8 499.6,161.2 510.3,177.0 458.4,177.7" fill="url(#pg)" stroke="#7d8283" stroke-width="0.9"/>
<polygon points="548.5,160.5 597.1,159.9 613.3,175.6 561.9,176.3" fill="url(#pg)" stroke="#7d8283" stroke-width="0.9"/>
<polygon points="510.3,177.0 561.9,176.3 577.0,193.9 522.2,194.7" fill="url(#pg)" stroke="#7d8283" stroke-width="0.9"/>
<polygon points="477.2,215.6 594.0,213.9 613.3,236.6 488.5,238.6" fill="url(#pg)" stroke="#7d8283" stroke-width="0.9"/>
<polygon points="433.9,266.2 568.8,263.8 589.3,294.3 661.4,292.9 691.7,328.5 534.5,331.7 516.7,295.7 443.6,297.0" fill="url(#pg)" stroke="#7d8283" stroke-width="0.9"/>
<polygon points="635.6,262.6 833.4,259.2 874.7,288.9 661.4,292.9" fill="url(#pg)" stroke="#7d8283" stroke-width="0.9"/>
<circle cx="141.7" cy="181.9" r="3.0" fill="#6a6ad8" fill-opacity="0.35"/><circle cx="141.7" cy="181.9" r="2.2" fill="#0404a4"/>
<circle cx="131.0" cy="200.3" r="3.0" fill="#6a6ad8" fill-opacity="0.35"/><circle cx="131.0" cy="200.3" r="2.2" fill="#0404a4"/>
<circle cx="105.0" cy="244.8" r="3.0" fill="#6a6ad8" fill-opacity="0.35"/><circle cx="105.0" cy="244.8" r="2.2" fill="#0404a4"/>
<circle cx="89.1" cy="272.2" r="3.0" fill="#6a6ad8" fill-opacity="0.35"/><circle cx="89.1" cy="272.2" r="2.2" fill="#0404a4"/>
<circle cx="48.5" cy="341.8" r="3.0" fill="#6a6ad8" fill-opacity="0.35"/><circle cx="48.5" cy="341.8" r="2.2" fill="#0404a4"/>
<circle cx="22.2" cy="386.9" r="3.0" fill="#6a6ad8" fill-opacity="0.35"/><circle cx="22.2" cy="386.9" r="2.2" fill="#0404a4"/>
<circle cx="201.7" cy="164.9" r="3.0" fill="#6a6ad8" fill-opacity="0.35"/><circle cx="201.7" cy="164.9" r="2.2" fill="#0404a4"/>
<circle cx="195.2" cy="181.2" r="3.0" fill="#6a6ad8" fill-opacity="0.35"/><circle cx="195.2" cy="181.2" r="2.2" fill="#0404a4"/>
<circle cx="187.8" cy="199.5" r="3.0" fill="#6a6ad8" fill-opacity="0.35"/><circle cx="187.8" cy="199.5" r="2.2" fill="#0404a4"/>
<circle cx="179.4" cy="220.2" r="3.0" fill="#6a6ad8" fill-opacity="0.35"/><circle cx="179.4" cy="220.2" r="2.2" fill="#0404a4"/>
<circle cx="169.9" cy="243.8" r="3.0" fill="#6a6ad8" fill-opacity="0.35"/><circle cx="169.9" cy="243.8" r="2.2" fill="#0404a4"/>
<circle cx="158.9" cy="271.0" r="3.0" fill="#6a6ad8" fill-opacity="0.35"/><circle cx="158.9" cy="271.0" r="2.2" fill="#0404a4"/>
<circle cx="146.2" cy="302.7" r="3.0" fill="#6a6ad8" fill-opacity="0.35"/><circle cx="146.2" cy="302.7" r="2.2" fill="#0404a4"/>
<circle cx="131.1" cy="340.1" r="3.0" fill="#6a6ad8" fill-opacity="0.35"/><circle cx="131.1" cy="340.1" r="2.2" fill="#0404a4"/>
<circle cx="113.0" cy="384.8" r="3.0" fill="#6a6ad8" fill-opacity="0.35"/><circle cx="113.0" cy="384.8" r="2.2" fill="#0404a4"/>
<circle cx="91.0" cy="439.4" r="3.0" fill="#6a6ad8" fill-opacity="0.35"/><circle cx="91.0" cy="439.4" r="2.2" fill="#0404a4"/>
<circle cx="252.0" cy="164.3" r="3.0" fill="#6a6ad8" fill-opacity="0.35"/><circle cx="252.0" cy="164.3" r="2.2" fill="#0404a4"/>
<circle cx="239.7" cy="219.3" r="3.0" fill="#6a6ad8" fill-opacity="0.35"/><circle cx="239.7" cy="219.3" r="2.2" fill="#0404a4"/>
<circle cx="221.3" cy="301.3" r="3.0" fill="#6a6ad8" fill-opacity="0.35"/><circle cx="221.3" cy="301.3" r="2.2" fill="#0404a4"/>
<circle cx="213.0" cy="338.4" r="3.0" fill="#6a6ad8" fill-opacity="0.35"/><circle cx="213.0" cy="338.4" r="2.2" fill="#0404a4"/>
<circle cx="203.1" cy="382.8" r="3.0" fill="#6a6ad8" fill-opacity="0.35"/><circle cx="203.1" cy="382.8" r="2.2" fill="#0404a4"/>
<circle cx="191.0" cy="436.8" r="3.0" fill="#6a6ad8" fill-opacity="0.35"/><circle cx="191.0" cy="436.8" r="2.2" fill="#0404a4"/>
<circle cx="299.5" cy="218.3" r="3.0" fill="#6a6ad8" fill-opacity="0.35"/><circle cx="299.5" cy="218.3" r="2.2" fill="#0404a4"/>
<circle cx="297.3" cy="268.6" r="3.0" fill="#6a6ad8" fill-opacity="0.35"/><circle cx="297.3" cy="268.6" r="2.2" fill="#0404a4"/>
<circle cx="292.3" cy="380.7" r="3.0" fill="#6a6ad8" fill-opacity="0.35"/><circle cx="292.3" cy="380.7" r="2.2" fill="#0404a4"/>
<circle cx="290.0" cy="434.3" r="3.0" fill="#6a6ad8" fill-opacity="0.35"/><circle cx="290.0" cy="434.3" r="2.2" fill="#0404a4"/>
<circle cx="351.7" cy="163.0" r="3.0" fill="#6a6ad8" fill-opacity="0.35"/><circle cx="351.7" cy="163.0" r="2.2" fill="#0404a4"/>
<circle cx="362.2" cy="240.7" r="3.0" fill="#6a6ad8" fill-opacity="0.35"/><circle cx="362.2" cy="240.7" r="2.2" fill="#0404a4"/>
<circle cx="365.8" cy="267.4" r="3.0" fill="#6a6ad8" fill-opacity="0.35"/><circle cx="365.8" cy="267.4" r="2.2" fill="#0404a4"/>
<circle cx="370.0" cy="298.4" r="3.0" fill="#6a6ad8" fill-opacity="0.35"/><circle cx="370.0" cy="298.4" r="2.2" fill="#0404a4"/>
<circle cx="380.9" cy="378.7" r="3.0" fill="#6a6ad8" fill-opacity="0.35"/><circle cx="380.9" cy="378.7" r="2.2" fill="#0404a4"/>
<circle cx="401.3" cy="162.4" r="3.0" fill="#6a6ad8" fill-opacity="0.35"/><circle cx="401.3" cy="162.4" r="2.2" fill="#0404a4"/>
<circle cx="425.6" cy="239.6" r="3.0" fill="#6a6ad8" fill-opacity="0.35"/><circle cx="425.6" cy="239.6" r="2.2" fill="#0404a4"/>
<circle cx="433.9" cy="266.2" r="3.0" fill="#6a6ad8" fill-opacity="0.35"/><circle cx="433.9" cy="266.2" r="2.2" fill="#0404a4"/>
<circle cx="443.6" cy="297.0" r="3.0" fill="#6a6ad8" fill-opacity="0.35"/><circle cx="443.6" cy="297.0" r="2.2" fill="#0404a4"/>
<circle cx="485.3" cy="429.4" r="3.0" fill="#6a6ad8" fill-opacity="0.35"/><circle cx="485.3" cy="429.4" r="2.2" fill="#0404a4"/>
<circle cx="450.6" cy="161.8" r="3.0" fill="#6a6ad8" fill-opacity="0.35"/><circle cx="450.6" cy="161.8" r="2.2" fill="#0404a4"/>
<circle cx="458.4" cy="177.7" r="3.0" fill="#6a6ad8" fill-opacity="0.35"/><circle cx="458.4" cy="177.7" r="2.2" fill="#0404a4"/>
<circle cx="477.2" cy="215.6" r="3.0" fill="#6a6ad8" fill-opacity="0.35"/><circle cx="477.2" cy="215.6" r="2.2" fill="#0404a4"/>
<circle cx="488.5" cy="238.6" r="3.0" fill="#6a6ad8" fill-opacity="0.35"/><circle cx="488.5" cy="238.6" r="2.2" fill="#0404a4"/>
<circle cx="516.7" cy="295.7" r="3.0" fill="#6a6ad8" fill-opacity="0.35"/><circle cx="516.7" cy="295.7" r="2.2" fill="#0404a4"/>
<circle cx="534.5" cy="331.7" r="3.0" fill="#6a6ad8" fill-opacity="0.35"/><circle cx="534.5" cy="331.7" r="2.2" fill="#0404a4"/>
<circle cx="499.6" cy="161.2" r="3.0" fill="#6a6ad8" fill-opacity="0.35"/><circle cx="499.6" cy="161.2" r="2.2" fill="#0404a4"/>
<circle cx="510.3" cy="177.0" r="3.0" fill="#6a6ad8" fill-opacity="0.35"/><circle cx="510.3" cy="177.0" r="2.2" fill="#0404a4"/>
<circle cx="522.2" cy="194.7" r="3.0" fill="#6a6ad8" fill-opacity="0.35"/><circle cx="522.2" cy="194.7" r="2.2" fill="#0404a4"/>
<circle cx="568.8" cy="263.8" r="3.0" fill="#6a6ad8" fill-opacity="0.35"/><circle cx="568.8" cy="263.8" r="2.2" fill="#0404a4"/>
<circle cx="589.3" cy="294.3" r="3.0" fill="#6a6ad8" fill-opacity="0.35"/><circle cx="589.3" cy="294.3" r="2.2" fill="#0404a4"/>
<circle cx="548.5" cy="160.5" r="3.0" fill="#6a6ad8" fill-opacity="0.35"/><circle cx="548.5" cy="160.5" r="2.2" fill="#0404a4"/>
<circle cx="561.9" cy="176.3" r="3.0" fill="#6a6ad8" fill-opacity="0.35"/><circle cx="561.9" cy="176.3" r="2.2" fill="#0404a4"/>
<circle cx="577.0" cy="193.9" r="3.0" fill="#6a6ad8" fill-opacity="0.35"/><circle cx="577.0" cy="193.9" r="2.2" fill="#0404a4"/>
<circle cx="594.0" cy="213.9" r="3.0" fill="#6a6ad8" fill-opacity="0.35"/><circle cx="594.0" cy="213.9" r="2.2" fill="#0404a4"/>
<circle cx="613.3" cy="236.6" r="3.0" fill="#6a6ad8" fill-opacity="0.35"/><circle cx="613.3" cy="236.6" r="2.2" fill="#0404a4"/>
<circle cx="635.6" cy="262.6" r="3.0" fill="#6a6ad8" fill-opacity="0.35"/><circle cx="635.6" cy="262.6" r="2.2" fill="#0404a4"/>
<circle cx="661.4" cy="292.9" r="3.0" fill="#6a6ad8" fill-opacity="0.35"/><circle cx="661.4" cy="292.9" r="2.2" fill="#0404a4"/>
<circle cx="691.7" cy="328.5" r="3.0" fill="#6a6ad8" fill-opacity="0.35"/><circle cx="691.7" cy="328.5" r="2.2" fill="#0404a4"/>
<circle cx="597.1" cy="159.9" r="3.0" fill="#6a6ad8" fill-opacity="0.35"/><circle cx="597.1" cy="159.9" r="2.2" fill="#0404a4"/>
<circle cx="613.3" cy="175.6" r="3.0" fill="#6a6ad8" fill-opacity="0.35"/><circle cx="613.3" cy="175.6" r="2.2" fill="#0404a4"/>
</svg>
</div>
<!-- viewport toolbar -->
<div class="a" style="left:698px;top:8px;width:27px;height:477px;background:#363636"></div>
<div class="a" style="left:698px;top:8px;width:27px;height:10px;background:#404040"></div>
<!-- separator -->
<div class="a" style="left:725px;top:8px;width:8px;height:904px;background:#424242;border-left:2px solid #272727"></div>
<svg class="a" style="left:727px;top:505px" width="6" height="75"><path d="M4.5 4L1.5 7L4.5 10Z" fill="#666"/><path d="M1 27H5M1 29H5M1 31H5M1 33H5M1 35H5M1 37H5" stroke="#5a5a5a" stroke-width="1"/><path d="M1.5 67L4.5 70L1.5 73Z" fill="#666"/></svg>

<!-- viewport overlays -->
<svg class="a" style="left:18px;top:20px" width="30" height="25"><g transform="rotate(-12 15 12)"><g fill="#262a28" stroke="#48524e" stroke-width="1.1"><circle cx="8.5" cy="10.5" r="5.3"/><circle cx="17" cy="7" r="5"/><rect x="7" y="11" width="15" height="10" rx="2"/><path d="M21 14L28 11.5V21L21 18.5Z"/></g><circle cx="8.5" cy="10.5" r="1.8" fill="#7a7a7a"/><circle cx="17" cy="7" r="1.7" fill="#7a7a7a"/><path d="M12 13H19V17H12Z" fill="#c0c0c0" opacity="0.75"/><path d="M10 17H15V20H10Z" fill="#8a8a8a" opacity="0.8"/></g></svg>
<div class="a" style="left:55.5px;top:22px;font:bold 15px 'Liberation Sans';color:#f4f4f4;line-height:17px;text-shadow:1px 1px 1px rgba(0,0,0,0.45)">View</div>
<div class="a" style="left:573px;top:14px;width:53px;height:20px;border-radius:10px;border:1.6px solid #a8bac2;background:rgba(66,84,96,0.6)"></div>
<div class="a" style="left:581.5px;top:17px;font:11.4px 'Liberation Sans';color:#ececec;line-height:14px;letter-spacing:-0.2px;-webkit-text-stroke:0.25px #ececec">Persp</div>
<svg class="a" style="left:613px;top:24px" width="6" height="4"><path d="M0.5 0.5H5.5L3 3.5Z" fill="#e8e8e8"/></svg>
<div class="a" style="left:630px;top:14px;width:62.5px;height:20px;border-radius:10px;border:1.6px solid #a8bac2;background:rgba(66,84,96,0.6)"></div>
<div class="a" style="left:638.5px;top:17px;font:11.4px 'Liberation Sans';color:#ececec;line-height:14px;letter-spacing:-0.2px;-webkit-text-stroke:0.25px #ececec">No cam</div>
<svg class="a" style="left:681.5px;top:24px" width="6" height="4"><path d="M0.5 0.5H5.5L3 3.5Z" fill="#e8e8e8"/></svg>
<!-- grid labels -->
<div class="a" style="left:367px;top:108.5px;font:bold 9px 'Liberation Sans';color:#5e6a72;opacity:0.6;transform:scale(1.2,0.45);transform-origin:0 0;line-height:10px">-10</div>
<div class="a" style="left:358px;top:72px;font:bold 8px 'Liberation Sans';color:#5e6a72;opacity:0.55;transform:scale(1.1,0.4);transform-origin:0 0;line-height:10px">-15</div>
<div class="a" style="left:350px;top:45px;font:bold 8px 'Liberation Sans';color:#5e6a72;opacity:0.5;transform:scale(1.0,0.35);transform-origin:0 0;line-height:10px">-20</div>
<div class="a" style="left:345px;top:25.5px;font:bold 8px 'Liberation Sans';color:#5e6a72;opacity:0.45;transform:scale(0.9,0.3);transform-origin:0 0;line-height:10px">-25</div>
<div class="a" style="left:65px;top:246px;font:bold 14px 'Liberation Sans';color:#8a8c98;opacity:0.65;transform:scale(2.4,0.72);transform-origin:0 0;line-height:16px">-5</div>
<div class="a" style="left:375px;top:241.5px;font:bold 14px 'Liberation Sans';color:#7a7e8c;opacity:0.8;transform:scale(2.3,0.8);transform-origin:0 0;line-height:16px">0</div>
<div class="a" style="left:402px;top:254px;font:bold 14px 'Liberation Sans';color:#737886;opacity:0.8;transform:scale(2.8,0.55);transform-origin:0 0;line-height:16px">0</div>
<div class="a" style="left:663px;top:235.5px;font:bold 14px 'Liberation Sans';color:#80848f;opacity:0.6;transform:scale(1.9,0.75);transform-origin:0 0;line-height:16px">5</div>
<div class="a" style="left:481.5px;top:434.5px;font:bold 22px 'Liberation Sans';color:#8e96b8;line-height:22px;transform:rotate(90deg) scale(0.82,2.1);transform-origin:0 0">5</div>
<!-- axes -->
<svg class="a" style="left:20px;top:446px" width="30" height="30"><path d="M5.5 12V21" stroke="#60c860" stroke-width="1.2"/><path d="M5.5 21H20" stroke="#d86060" stroke-width="1.2"/><text x="3" y="11.5" font-family="Liberation Sans" font-size="12" fill="#48d048">y</text><text x="19" y="22.5" font-family="Liberation Sans" font-size="11" fill="#e03838">x</text><rect x="4" y="20.5" width="1.2" height="7" fill="#5050d0"/><text x="5" y="27.5" font-family="Liberation Sans" font-size="9.5" font-weight="bold" fill="#3838c8">z</text></svg>
<div class="a" style="left:555.5px;top:461.5px;font:bold 11px 'Liberation Sans';color:#e4ea50;line-height:13px;letter-spacing:-0.1px">Non-Commercial Edition</div>
<!-- viewport bottom bar -->
<div class="a" style="left:0;top:484px;width:725px;height:7px;background:#3e3e3e"></div>

<!-- left strip details -->
<div class="a" style="left:0;top:8px;width:8px;height:11px;background:#4a413a"></div>
<div class="a" style="left:0;top:19px;width:8px;height:1px;background:#252525"></div>
<div class="a" style="left:0;top:25px;width:4px;height:78px;background:#2c2c2c;border-right:1px solid #555"></div>
<div class="a" style="left:0;top:50px;width:3px;height:25px;background:#7a90b0"></div>
<div class="a" style="left:0;top:107px;width:8px;height:1px;background:#4a4a4a"></div>
<svg class="a" style="left:0;top:152px" width="8" height="260"><path d="M0 3L4 6.5L0 10Z" fill="#d0d0d0"/><rect x="0" y="11.5" width="4" height="28" fill="#8aa6c6"/><circle cx="0.5" cy="52.5" r="3" fill="#b02020"/><circle cx="0.5" cy="87" r="3" fill="#b02020"/><circle cx="0.5" cy="175.5" r="2.5" fill="#b04040"/><path d="M0 179L4 183L0 187Z" fill="#b8b8b8"/><rect x="0" y="204" width="3" height="20" fill="#b8b8b8"/><path d="M0 248L4 252L0 256Z" fill="#b0b0b0"/></svg>
<svg class="a" style="left:0;top:470px" width="8" height="10"><path d="M0 1L4 5L0 9Z" fill="#a8a8a8"/></svg>

<!-- toolbar icons -->
<svg class="a" style="left:698px;top:8px" width="27" height="477">
<g transform="translate(-698 -8)">
<rect x="698" y="8" width="27" height="10.5" fill="#3f3f3f"/>
<path d="M716 9.5L722.5 13.5L716 17.5Z" fill="#0a0a0a"/>
<rect x="698" y="18.5" width="27" height="1.2" fill="#262626"/>
<rect x="700" y="40.5" width="23" height="24.5" fill="#62789a"/>
<path d="M711.5 47L721 52.5L711.5 58L702 52.5Z" fill="none" stroke="#d8d8d8" stroke-width="1.4"/><path d="M711.5 50L715.5 52.5L711.5 55L707.5 52.5Z" fill="#2a2a2a"/>
<path d="M720 61.5L723 64.5H720Z" fill="#1a1a1a"/>
<path d="M703 74.5L715 72.5L719.5 85L706 88Z" fill="none" stroke="#88b070" stroke-width="1.6"/><path d="M709 77Q714 76 713.5 81Q710 84 708.5 80" fill="none" stroke="#98c080" stroke-width="1.3"/>
<path d="M720 85.5L723.5 88.5L720 91.5Z" fill="#777"/>
<path d="M707 105V101.5Q711.5 95.5 716 101.5V105" fill="none" stroke="#e0e0e0" stroke-width="2"/><rect x="705" y="104.5" width="13.5" height="10.5" fill="#dcdcd0"/><path d="M705 108H718.5M705 111.5H718.5" stroke="#a0a0a0" stroke-width="0.8"/>
<path d="M711.5 125A6.5 6.5 0 0 1 718 131.5Q718 136 714 138.5V142H709V138.5Q705 136 705 131.5A6.5 6.5 0 0 1 711.5 125Z" fill="#3a3a3a" stroke="#c8c8c8" stroke-width="1.3"/><path d="M708.5 128.5L714.5 134.5M714.5 128.5L708.5 134.5" stroke="#e8e8e8" stroke-width="1.8"/>
<circle cx="710.5" cy="159.5" r="8" fill="#c8c8c8"/><circle cx="712.5" cy="160.5" r="5.5" fill="#e8e8e8" stroke="#999" stroke-width="0.8"/>
<path d="M720 165.5L723.5 168.5L720 171.5Z" fill="#777"/>
<rect x="700.5" y="173.5" width="22.5" height="23.5" fill="#62789a"/>
<path d="M711 176.5A5.5 5.5 0 0 1 716.5 182Q716.5 186 713.5 188V190H708.5V188Q705.5 186 705.5 182A5.5 5.5 0 0 1 711 176.5Z" fill="#e8e8a0" stroke="#fff8c0" stroke-width="0.6"/><path d="M711 179V186M707.5 182.5H714.5" stroke="#5a5a30" stroke-width="1.8"/>
<path d="M720 192.5L723 195.5H720Z" fill="#1a1a1a"/>
<path d="M711 201.5A5.5 5.5 0 0 1 716.5 207Q716.5 211 713.5 213V215H708.5V213Q705.5 211 705.5 207A5.5 5.5 0 0 1 711 201.5Z" fill="#e8e8e0"/><path d="M711 204V211M707.5 207.5H714.5" stroke="#444" stroke-width="1.8"/><ellipse cx="711" cy="217.5" rx="8" ry="2.3" fill="#1a1a1a" stroke="#c8c8c8" stroke-width="0.9"/>
<path d="M720 214.5L723.5 217.5L720 220.5Z" fill="#777"/>
<rect x="700.5" y="228.5" width="22.5" height="24.5" fill="#62789a"/>
<path d="M703.5 234L711 231L718.5 234L718 247L711 250L704 247Z" fill="#f0f0f0"/><path d="M706 236H711V241H706ZM711 241H716V246H711ZM711 232L716 234V236H711Z" fill="#1e1e1e"/><circle cx="710.5" cy="240" r="3.5" fill="#3a3a3a"/>
<path d="M720 248.5L723 251.5H720Z" fill="#1a1a1a"/>
<path d="M702 259.5L705 258.5L709 263L718 267" fill="none" stroke="#d8d8d8" stroke-width="1.4"/><ellipse cx="706" cy="265" rx="3.2" ry="2.6" fill="#1a1a1a" stroke="#e0e0e0" stroke-width="1.2"/><ellipse cx="713" cy="268" rx="3.2" ry="2.6" fill="#1a1a1a" stroke="#e0e0e0" stroke-width="1.2"/>
<path d="M717 273.5H723L720 277Z" fill="#777"/>
<path d="M703 284L706 283L710 287L719 290" fill="none" stroke="#d8d8d8" stroke-width="1.3"/><ellipse cx="708" cy="289.5" rx="3" ry="2.4" fill="#1a1a1a" stroke="#e0e0e0" stroke-width="1.1"/><ellipse cx="715" cy="292" rx="3" ry="2.4" fill="#1a1a1a" stroke="#e0e0e0" stroke-width="1.1"/><path d="M701.5 291.5H711V301H701.5Z" fill="#d0d0d0"/><path d="M704 293.5V299L708.5 296.2Z" fill="#f4f4f4"/>
<path d="M719.5 295L723.5 298.5L719.5 302Z" fill="#777"/>
<rect x="698" y="305.5" width="27" height="6" fill="#323232"/>
<rect x="700" y="312" width="23.5" height="24.5" fill="#62789a"/>
<circle cx="711" cy="324.5" r="4" fill="#e8e8e8" stroke="#2a2a2a" stroke-width="1.2"/>
<circle cx="707.5" cy="354" r="3.5" fill="none" stroke="#e0e0e0" stroke-width="1.6"/><path d="M709 352L717.5 344.5" stroke="#d8d8d8" stroke-width="1.5"/>
<circle cx="716.5" cy="373.5" r="3" fill="#e0e0e0"/><path d="M714.5 375L705.5 384.5L708 378.5Z" fill="#c8c8c8"/><path d="M714 376L706 384" stroke="#d0d0d0" stroke-width="2"/>
<circle cx="707" cy="409.5" r="3" fill="#e0e0e0"/><text x="707.5" y="407" font-family="Liberation Sans" font-weight="bold" font-size="11.5" fill="#ececec">12</text>
<path d="M705 435L713 426.5L719.5 432L717.5 440Z" fill="#d0d0d0"/><path d="M712 433L716.5 423.5" stroke="#e8e8e8" stroke-width="1.6"/>
<path d="M704.5 462L710 457H719L717.5 464.5Z" fill="#d0d0d0"/><path d="M707 461H717" stroke="#555" stroke-width="0.8"/><text x="708" y="459.5" font-family="Liberation Sans" font-weight="bold" font-size="11.5" fill="#ececec" stroke="#363636" stroke-width="0.4">12</text>
<path d="M708.5 471H714.5L711.5 476Z" fill="#6a6a6a"/>
</g></svg>

<!-- node graph -->
<div class="a" style="left:733px;top:8px;width:291px;height:814px;background:#303030"></div>
<div class="a" style="left:733px;top:8px;width:291px;height:1.5px;background:#222"></div>
<div class="a" style="left:733px;top:822px;width:291px;height:90px;background:#232323"></div>
<div class="a" style="left:733px;top:833px;width:291px;height:1px;background:#5a4a66"></div>
<div class="a" style="left:763.5px;top:852px;width:20px;height:11px;background:#a2a2a2"></div>
<div class="a" style="left:750.5px;top:883.5px;width:33px;height:10px;background:#a2a2a2"></div>
<div class="a" style="left:953.5px;top:868.5px;width:32.5px;height:10.5px;background:#a2a2a2"></div>
<div class="a" style="left:953.5px;top:900px;width:32.5px;height:10.5px;background:#a2a2a2"></div>


<!-- node graph -->
<svg class="a" style="left:733px;top:8px" width="291" height="814">
<g transform="translate(-733 -8)">
<path d="M856 123V183" stroke="#8ea0b4" stroke-width="1.2"/>
<path d="M856 237L833 296.5" stroke="#7e98b4" stroke-width="1.2"/>
<circle cx="856" cy="437" r="57" fill="#4a6aa6"/>
<circle cx="856" cy="437" r="39" fill="#9b6dd2"/>
<path d="M856 350V411" stroke="#c8c8b0" stroke-width="1.2"/>
<path d="M856 464L833 524" stroke="#a8b8c8" stroke-width="1.2"/>
<circle cx="856" cy="122.7" r="5.6" fill="#c4c4c4"/>
<circle cx="856" cy="183.3" r="5.6" fill="#c4c4c4"/>
<circle cx="856" cy="237" r="5.6" fill="#c4c4c4"/>
<circle cx="833" cy="297" r="5.6" fill="#c4c4c4"/>
<circle cx="879" cy="297" r="5.6" fill="#c4c4c4"/>
<circle cx="856" cy="350.3" r="5.6" fill="#c4c4c4"/>
<circle cx="856" cy="410.7" r="5.6" fill="#c4c4c4"/>
<circle cx="856" cy="463.6" r="5.6" fill="#c4c4c4"/>
<circle cx="833" cy="524" r="5.6" fill="#c4c4c4"/>
<circle cx="879" cy="524" r="5.6" fill="#c4c4c4"/>
<circle cx="856" cy="577.6" r="5.6" fill="#c4c4c4"/>
</g>
</svg>
<div class="node" style="top:79px"><svg style="position:absolute;left:0;top:0" width="114" height="35"><path d="M18 0L13.5 35M33 0L29 35M85.5 0L81 35M101.5 0L97.5 35" stroke="#8c8c8c" stroke-width="1" fill="none"/></svg>
<svg style="position:absolute;left:43px;top:14px" width="29" height="11"><defs><linearGradient id="tg" x1="0" x2="1"><stop offset="0" stop-color="#9aa4ac"/><stop offset="0.5" stop-color="#d8dee2"/><stop offset="1" stop-color="#8a949c"/></linearGradient></defs><path d="M5 1H22.5L27.5 10H1Z" fill="url(#tg)" stroke="#5a6268" stroke-width="1"/></svg>
</div>
<div class="nl" style="top:85.2px">grid2</div>
<div class="node" style="top:192.5px"><svg style="position:absolute;left:0;top:0" width="114" height="35"><path d="M18 0L13.5 35M33 0L29 35M85.5 0L81 35M101.5 0L97.5 35" stroke="#8c8c8c" stroke-width="1" fill="none"/></svg>
<svg style="position:absolute;left:45px;top:2px" width="24" height="30"><defs><linearGradient id="tr" x1="0" x2="1"><stop offset="0" stop-color="#a8aca8"/><stop offset="0.45" stop-color="#d8dcd8"/><stop offset="1" stop-color="#4e5250"/></linearGradient></defs><path d="M5.5 12L7 27.5Q12 29.5 17 27.5L18.5 12Z" fill="url(#tr)" stroke="#707070" stroke-width="0.6"/><path d="M9 14V27M12 14.5V28M15 14V27" stroke="#6a6a6a" stroke-width="0.7" opacity="0.7"/><path d="M4 10Q5 4 10 4.5Q13 2.5 16 5Q20 5 20.5 9.5Q19 13 12 13.5Q5 13.5 4 10Z" fill="#e4e8e4" stroke="#8a8a8a" stroke-width="0.6"/><path d="M9 7Q12 6 14 8" stroke="#7a7a7a" stroke-width="0.8" fill="none"/></svg>
</div>
<div class="nl" style="top:197px">delete2</div>
<div class="node" style="top:306px"><svg style="position:absolute;left:0;top:0" width="114" height="35"><path d="M18 0L13.5 35M33 0L29 35M85.5 0L81 35M101.5 0L97.5 35" stroke="#8c8c8c" stroke-width="1" fill="none"/></svg><svg style="position:absolute;left:40px;top:0" width="34" height="35"><path d="M4.2 6.2L19.8 3.4L13.2 12.4Z M19.8 3.4L30.3 9.7L13.2 12.4Z" fill="#e6c6d0"/><path d="M4.2 6.2L13.2 12.4L14.5 30.3L6.4 23.3Z" fill="#d8bcc6"/><path d="M13.2 12.4L30.3 9.7L29.5 25.5L14.5 30.3Z" fill="#cfc8d4"/><path d="M16 15L27 13L26.5 24L16.5 27Z" fill="#b8c0d0" opacity="0.8"/><path d="M4.2 6.2L19.8 3.4L30.3 9.7L29.5 25.5L14.5 30.3L6.4 23.3Z M4.2 6.2L13.2 12.4L30.3 9.7 M13.2 12.4L14.5 30.3" fill="none" stroke="#6e5c64" stroke-width="1.3" stroke-linejoin="round"/><path d="M4.2 6.2L29.5 25.5M19.8 3.4L14.5 30.3M6.4 23.3L30.3 9.7" stroke="#c890a0" stroke-width="0.6" opacity="0.5"/></svg></div>
<div class="nl" style="top:310.8px">divide6</div>
<div class="a" style="left:797px;top:418px;width:118px;height:39px;border-radius:6px;background:#e6c22a"></div>
<div class="node" style="left:799.5px;top:420.5px;width:113px;height:34px;border-radius:4px;box-shadow:inset 0 0 0 0.6px #555">
<svg style="position:absolute;left:0;top:0" width="114" height="35"><path d="M17 0L12.5 35M32.5 0L28.5 35M85 0L81 35" stroke="#8c8c8c" stroke-width="1" fill="none"/><path d="M100.5 0H114V35H96.5Z" fill="#10aff2"/></svg>
<svg style="position:absolute;left:42px;top:1px" width="31" height="31"><defs><linearGradient id="bl" x1="0" y1="0" x2="0" y2="1"><stop offset="0" stop-color="#5a5a5a"/><stop offset="0.3" stop-color="#c8ccc8"/><stop offset="0.62" stop-color="#d8d8dc"/><stop offset="0.64" stop-color="#f0a030"/><stop offset="1" stop-color="#d86818"/></linearGradient><linearGradient id="bl2" x1="0" x2="1"><stop offset="0" stop-color="#000" stop-opacity="0.25"/><stop offset="0.45" stop-color="#fff" stop-opacity="0.15"/><stop offset="1" stop-color="#000" stop-opacity="0.35"/></linearGradient></defs><polygon points="28.7,17.4 25.9,23.4 20.6,27.4 14.1,28.5 7.8,26.4 3.3,21.6 1.4,15.3 2.7,8.8 6.9,3.7 13.0,1.1 19.6,1.6 25.1,5.1 28.4,10.8" fill="url(#bl)" stroke="#4a4040" stroke-width="1.2"/><polygon points="28.7,17.4 25.9,23.4 20.6,27.4 14.1,28.5 7.8,26.4 3.3,21.6 1.4,15.3 2.7,8.8 6.9,3.7 13.0,1.1 19.6,1.6 25.1,5.1 28.4,10.8" fill="url(#bl2)"/><path d="M15 5L9 17H21ZM9 17L6 10M21 17L24 10M9 17L15 23L21 17" fill="none" stroke="#555" stroke-width="0.7" opacity="0.8"/><path d="M15.5 7L12 15H19Z" fill="#f4f4f4" opacity="0.9"/></svg>
</div>
<div class="nl" style="top:424px">facet1</div>
<div class="node" style="top:533.4px"><svg style="position:absolute;left:0;top:0" width="114" height="35"><path d="M18 0L13.5 35M33 0L29 35M85.5 0L81 35M101.5 0L97.5 35" stroke="#8c8c8c" stroke-width="1" fill="none"/></svg><svg style="position:absolute;left:40px;top:0" width="34" height="35"><path d="M4.2 6.2L19.8 3.4L13.2 12.4Z M19.8 3.4L30.3 9.7L13.2 12.4Z" fill="#e6c6d0"/><path d="M4.2 6.2L13.2 12.4L14.5 30.3L6.4 23.3Z" fill="#d8bcc6"/><path d="M13.2 12.4L30.3 9.7L29.5 25.5L14.5 30.3Z" fill="#cfc8d4"/><path d="M16 15L27 13L26.5 24L16.5 27Z" fill="#b8c0d0" opacity="0.8"/><path d="M4.2 6.2L19.8 3.4L30.3 9.7L29.5 25.5L14.5 30.3L6.4 23.3Z M4.2 6.2L13.2 12.4L30.3 9.7 M13.2 12.4L14.5 30.3" fill="none" stroke="#6e5c64" stroke-width="1.3" stroke-linejoin="round"/><path d="M4.2 6.2L29.5 25.5M19.8 3.4L14.5 30.3M6.4 23.3L30.3 9.7" stroke="#c890a0" stroke-width="0.6" opacity="0.5"/></svg></div>
<div class="nl" style="top:538px">divide7</div>

<!-- lower pane -->
<div class="a" style="left:0;top:484px;width:725px;height:7px;background:#3e3e3e"></div>
<svg class="a" style="left:310px;top:484px" width="80" height="7"><path d="M5 5L8 2L11 5Z" fill="#b0b0b0"/><path d="M68 2H74L71 5Z" fill="#b0b0b0"/><path d="M30 2.5H52M30 4.5H52" stroke="#5a5a5a" stroke-width="1" stroke-dasharray="1 1"/></svg>
<div class="a" style="left:0;top:491px;width:725px;height:20px;background:#282828"></div>
<div class="a" style="left:0;top:491px;width:40px;height:20px;background:#3c3c3c"></div>
<div class="a" style="left:0;top:511px;width:725px;height:36px;background:#3a3a3a"></div>
<div class="a" style="left:0;top:547px;width:725px;height:2px;background:#2e2e2e"></div>
<div class="a" style="left:0;top:549px;width:725px;height:28px;background:#3a3a3a"></div>
<div class="a" style="left:0;top:577px;width:725px;height:2px;background:#2e2e2e"></div>
<div class="a" style="left:0;top:579px;width:725px;height:333px;background:#3a3a3a"></div>


<!-- tab bar contents -->
<div class="a" style="left:-2px;top:493px;font:italic 11.6px 'Liberation Sans';color:#bdbdbd;line-height:15px">t1</div>
<div class="a" style="left:27.5px;top:494.5px;font:bold 11px 'Liberation Sans';color:#d8d8d8;line-height:15px">&#215;</div>
<svg class="a" style="left:47px;top:494px" width="13" height="13"><path d="M6.5 1.5V11.5M1.5 6.5H11.5" stroke="#e8e8e8" stroke-width="2.2"/></svg>
<div class="a" style="left:691px;top:497px;width:12px;height:9px;background:#dcdcdc"></div>
<svg class="a" style="left:711px;top:497px" width="11" height="9"><path d="M1 1.5H10L5.5 8Z" fill="#e0e0e0"/></svg>
<!-- path row -->
<svg class="a" style="left:4px;top:523px" width="16" height="14"><path d="M1 5H8V1.5L14.5 7L8 12.5V9H1Z" fill="#6a6a6a"/></svg>
<div class="a" style="left:30px;top:517px;width:637px;height:25px;background:#353535;border:1px solid #242424;border-radius:2px"></div>
<div class="a" style="left:655px;top:518px;width:12px;height:23px;background:#2c2c2c"></div>
<svg class="a" style="left:657px;top:526px" width="8" height="6"><path d="M0.5 0.5H7.5L4 5.5Z" fill="#8a8a8a"/></svg>
<svg class="a" style="left:79px;top:518px" width="8" height="24"><path d="M1 0L6.5 12L1 24" stroke="#262626" stroke-width="1.2" fill="none"/></svg>
<!-- obj icon -->
<svg class="a" style="left:34px;top:519px" width="20" height="22">
<rect x="2" y="9" width="16" height="11" fill="#4e5358"/>
<path d="M4 8.5H16M3 4.5L7 3.5M10 3L14 2" stroke="#c8c8c8" stroke-width="1.3" stroke-dasharray="2.5 1.5"/>
<rect x="3" y="4.5" width="3.5" height="4" fill="#d8d8d8"/>
<path d="M4 12H10M4 14.5H15M4 17H12" stroke="#b8bcc0" stroke-width="1.1"/>
</svg>
<div class="a" style="left:58px;top:521px;font:11.8px 'Liberation Sans';color:#d8d8d8;line-height:15px">obj</div>
<!-- DIVIDE icon -->
<svg class="a" style="left:89px;top:519px" width="24" height="22">
<defs><linearGradient id="cyl" x1="0" x2="1"><stop offset="0" stop-color="#4a80c0"/><stop offset="0.4" stop-color="#9ac4ea"/><stop offset="1" stop-color="#3a6aa8"/></linearGradient>
<radialGradient id="sph" cx="0.35" cy="0.35" r="0.7"><stop offset="0" stop-color="#ff9080"/><stop offset="0.5" stop-color="#e03020"/><stop offset="1" stop-color="#901808"/></radialGradient>
<linearGradient id="cone" x1="0" x2="1"><stop offset="0" stop-color="#fff6a0"/><stop offset="1" stop-color="#e0b010"/></linearGradient></defs>
<path d="M2 4V15Q5.5 17 9.5 15V4Z" fill="url(#cyl)"/><ellipse cx="5.75" cy="4" rx="3.75" ry="1.6" fill="#b8d8f4"/>
<circle cx="17" cy="10.5" r="5.6" fill="url(#sph)"/>
<path d="M12 8L6.5 18.5Q12 20.5 17 18.5Z" fill="url(#cone)"/>
</svg>
<div class="a" style="left:114px;top:521px;font:11px 'Liberation Sans';color:#dadada;line-height:15px;letter-spacing:-0.35px">DIVIDE</div>
<!-- pin & target -->
<svg class="a" style="left:676px;top:521px" width="22" height="18"><path d="M1 9.5L8 8.5V10.5Z" fill="#d8d8d8"/><path d="M8 5.5L10.5 3H11.5V16H10.5L8 13.5Z" fill="#e0e0e0"/><path d="M11.5 6.5H15.5V12.5H11.5Z" fill="#c8c8c8"/><path d="M15.5 4.5H17.5V14.5H15.5Z" fill="#e4e4e4"/></svg>
<svg class="a" style="left:700px;top:519px" width="22" height="22"><circle cx="11" cy="11" r="9.5" fill="#353a44" stroke="#8890b0" stroke-width="1.5"/><circle cx="11" cy="11" r="5.8" fill="#2e3a58" stroke="#5a6a98" stroke-width="1.3"/><circle cx="11" cy="11" r="3.2" fill="#6a88c8" opacity="0.6"/><circle cx="11" cy="11" r="1.8" fill="#9ab4e8"/></svg>
<!-- Facet row -->
<div class="a" style="left:1px;top:555px;font:bold 11px 'Liberation Sans';color:#dcdcdc;line-height:15px">Facet</div>
<div class="a" style="left:37px;top:553px;width:547px;height:20px;background:#141414"></div>
<div class="a" style="left:40px;top:556px;font:12px 'Liberation Mono';color:#dedede;line-height:15px">facet1</div>
<!-- facet row icons -->
<svg class="a" style="left:589px;top:550px" width="26" height="24"><g transform="translate(11.7 11.7)"><g fill="#e4e4e0"><circle r="6.3"/><g id="teeth"><rect x="-2" y="-9.3" width="4" height="5" rx="1.6"/><rect x="-2" y="4.3" width="4" height="5" rx="1.6"/><rect x="-9.3" y="-2" width="5" height="4" rx="1.6"/><rect x="4.3" y="-2" width="5" height="4" rx="1.6"/></g><g transform="rotate(45)"><rect x="-2" y="-9.3" width="4" height="5" rx="1.6"/><rect x="-2" y="4.3" width="4" height="5" rx="1.6"/><rect x="-9.3" y="-2" width="5" height="4" rx="1.6"/><rect x="4.3" y="-2" width="5" height="4" rx="1.6"/></g></g><circle r="2.6" fill="#3a3a3a"/></g><path d="M17 18.5H24L20.5 22.5Z" fill="#8a8a8a"/></svg>
<svg class="a" style="left:617px;top:550px" width="26" height="24"><path d="M1.5 13.5Q5 11 12 11.5Q17 12 19.5 13Q18 18.5 11 19.5Q4 19.5 1.5 13.5Z" fill="#b8b8b8"/><path d="M2 13.5Q9 12 19 13" stroke="#e0e0e0" stroke-width="1.2" fill="none"/><path d="M15.5 11.5L22 5" stroke="#cfcfcf" stroke-width="2.2" stroke-linecap="round"/><path d="M18 18.5H25L21.5 22.5Z" fill="#8a8a8a"/></svg>
<svg class="a" style="left:644px;top:550px" width="24" height="24"><circle cx="10.5" cy="10.5" r="6.8" fill="#4a4e52" stroke="#d8d8d8" stroke-width="1.8"/><path d="M15.5 15.5L20.5 20.5" stroke="#d8d8d8" stroke-width="2.4" stroke-linecap="round"/></svg>
<svg class="a" style="left:673px;top:551px" width="22" height="22"><circle cx="10.5" cy="10.5" r="8.6" fill="#2e3032" stroke="#cfcfcf" stroke-width="1.5"/><text x="10.5" y="15.5" text-anchor="middle" font-family="Liberation Serif" font-style="italic" font-weight="bold" font-size="13.5" fill="#eeeeee">i</text></svg>
<svg class="a" style="left:700px;top:551px" width="22" height="22"><circle cx="11" cy="10.5" r="8.6" fill="#2a2c2e" stroke="#cfcfcf" stroke-width="1.5"/><text x="11" y="15" text-anchor="middle" font-family="Liberation Sans" font-weight="bold" font-size="12.5" fill="#f0f0f0">?</text></svg>

<!-- params -->
<div class="lbl rl" style="top:587px">Group</div>
<div class="a" style="left:135px;top:583px;width:532px;height:20px;background:#151515"></div>
<div class="a" style="left:667px;top:582px;width:20px;height:21px;background:#2e2e2e;border-radius:2px"></div>
<svg class="a" style="left:672px;top:589px" width="9" height="6"><path d="M0.5 0.5H8.5L4.5 5.5Z" fill="#8a8a8a"/></svg>
<svg class="a" style="left:695px;top:583px" width="15" height="19"><path d="M1.5 1L13.5 10.5L8 11L11 18L1.5 13Z" fill="#d8d8d8"/></svg>

<div class="lbl rl" style="top:614px">Group Type</div>
<div class="a" style="left:135px;top:608px;width:135px;height:23px;background:linear-gradient(#4a4a4a,#3f3f3f);border-radius:2px;box-shadow:0 1px 1px #262626"></div>
<div class="a" style="left:254px;top:608px;width:16px;height:23px;background:#303030"></div>
<svg class="a" style="left:257px;top:612px" width="10" height="14"><path d="M1.5 5.5L5 1L8.5 5.5ZM1.5 8.5L5 13L8.5 8.5Z" fill="#a0a0a0"/></svg>
<div class="lbl" style="left:149.5px;top:614px;letter-spacing:-0.15px">Guess from Group</div>

<div class="cb" style="top:640px"></div><div class="ct" style="top:639px">Pre-Compute Normals</div>
<div class="cb" style="top:663px"></div><div class="ct" style="top:662px">Make Normals Unit Length</div>
<div class="cb" style="top:686px"></div><div class="ct" style="top:685px">Unique Points</div>

<div class="lbl rl" style="top:711px">Consolidate</div>
<div class="a" style="left:135px;top:706px;width:177px;height:22px;background:linear-gradient(#4a4a4a,#3f3f3f);border-radius:2px;box-shadow:0 1px 1px #262626"></div>
<div class="a" style="left:296px;top:706px;width:16px;height:22px;background:#303030"></div>
<svg class="a" style="left:299px;top:710px" width="10" height="14"><path d="M1.5 5.5L5 1L8.5 5.5ZM1.5 8.5L5 13L8.5 8.5Z" fill="#a0a0a0"/></svg>
<div class="lbl" style="left:149px;top:711px">No Consolidate</div>

<div class="lbl rl" style="top:737.5px;color:#6c6c6c">Distance</div>
<div class="a" style="left:135px;top:732px;width:77px;height:22px;background:#353535"></div>
<div class="a" style="left:137px;top:737px;font:12px 'Liberation Mono';color:#4c4c4c;line-height:15px">0.001</div>
<div class="a" style="left:215px;top:732px;width:4px;height:21px;background:#4a4a4a"></div>
<div class="a" style="left:219px;top:743.5px;width:493px;height:2px;background:#303030"></div>

<svg class="a" style="left:134px;top:760px" width="14" height="14"><path d="M1 6.5L4.5 4.5L6 7.5L12.5 1L6 12.5Z" fill="#7a7a7a"/></svg>
<div class="ct" style="top:762px;color:#6e6e6e">Use Accurate Distance</div>

<div class="cb" style="top:783px;background:#1a1a1a"></div>
<svg class="a" style="left:134px;top:782px" width="14" height="14"><path d="M1 6.5L4.5 4.5L6 7.5L12.5 1L6 12.5Z" fill="#f2a81e"/></svg>
<div class="ct" style="top:784.5px;font-weight:bold;color:#e4e4e4;letter-spacing:-0.5px">Remove Inline Points</div>

<div class="lbl rl" style="top:809.5px">Distance</div>
<div class="a" style="left:135px;top:805px;width:78px;height:21px;background:#141414"></div>
<div class="a" style="left:138px;top:810px;font:12px 'Liberation Mono';color:#e0e0e0;line-height:15px">0.001</div>
<div class="a" style="left:216px;top:805px;width:4px;height:20px;background:#a8a8a8"></div>
<div class="a" style="left:220px;top:813.5px;width:70px;height:3px;background:#141414"></div>

<div class="cb" style="top:834px"></div><div class="ct" style="top:833px">Orient Polygons</div>
<div class="cb" style="top:857px"></div><div class="ct" style="top:856.5px">Cusp Polygons</div>

<div class="lbl rl" style="top:882px;color:#6c6c6c">Cusp Angle</div>
<div class="a" style="left:135px;top:876px;width:79px;height:23px;background:#363636"></div>
<div class="a" style="left:138px;top:881px;font:12px 'Liberation Mono';color:#4c4c4c;line-height:15px">20</div>
<div class="a" style="left:219px;top:887px;width:493px;height:2px;background:#303030"></div>
<div class="a" style="left:463px;top:877px;width:3.5px;height:21px;background:#4a4a4a"></div>
<div class="cb" style="top:905px"></div><div class="ct" style="top:905.5px">Remove Degenerate</div>

<!-- tooltip -->
<div class="a" style="left:284px;top:791px;width:479px;height:76px;background:#000"></div>
<div class="a" style="left:288px;top:793.5px;font:bold 11.4px 'Liberation Sans';color:#e8e8e8;line-height:13px">Remove Inline Points</div>
<div class="a" style="left:284px;top:808px;width:479px;height:1px;background:#d0d0d0"></div>
<div class="a" style="left:287.5px;top:814.5px;font:11.8px 'Liberation Sans';color:#d8d8d8;line-height:13px">Parameter: inline</div>
<div class="a" style="left:287.5px;top:830.5px;font:11.8px 'Liberation Sans';color:#d8d8d8;line-height:13px">Remove points from polygons if they lie on the line connecting the previous and next point.</div>
<div class="a" style="left:284px;top:849px;width:479px;height:18px;background:#3f5077"></div>
<svg class="a" style="left:286px;top:850px" width="15" height="15"><circle cx="7.5" cy="7.5" r="6.3" fill="#2a3350" stroke="#e0e0e0" stroke-width="1.5"/><text x="7.5" y="11.5" text-anchor="middle" font-family="Liberation Sans" font-weight="bold" font-size="10" fill="#e8e8e8">?</text></svg>
<div class="a" style="left:302px;top:851.5px;font:11.4px 'Liberation Sans';color:#dcdcdc;line-height:13px">Press F1 for more help.</div>

</body></html>
